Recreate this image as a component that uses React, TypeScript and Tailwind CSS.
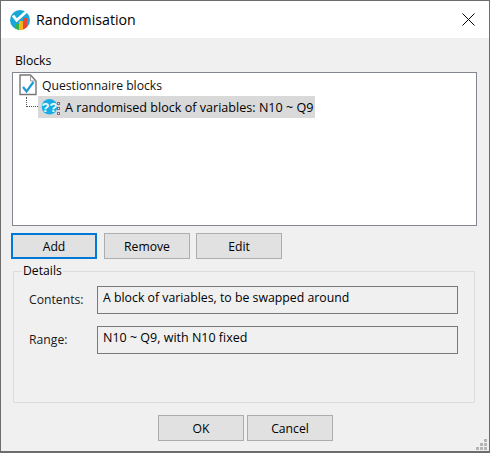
function AppIcon() {
  return (
    <svg width="20" height="20" viewBox="0 0 20 20" className="shrink-0">
      <circle cx="10" cy="10" r="10" fill="#19a7d8" />
      <path d="M3 5.500l3.700 4.800L16.500 1.500" fill="none" stroke="#fff" strokeWidth="2.800" />
      <path d="M5 18.300a10 10 0 0 0 4 1.600V14H5z" fill="#35b34a" />
      <rect x="9" y="11" width="4" height="9" fill="#f6b51e" />
      <path d="M13 8h4v9.100a10 10 0 0 1-4 2.500z" fill="#e8483a" />
    </svg>
  );
}

function DocIcon() {
  return (
    <svg width="18" height="22" viewBox="0 0 18 22" className="shrink-0">
      <path d="M1 1H11.500L17 7V20.500H1z" fill="#fff" stroke="#777" strokeWidth="1.400" />
      <path d="M11.500 1V7H17" fill="none" stroke="#999" />
      <path d="M4 13l3.500 4.500 7-9.500" fill="none" stroke="#1c9ad6" strokeWidth="2.200" />
    </svg>
  );
}

function BlockIcon() {
  return (
    <svg width="21" height="20" viewBox="0 0 21 20" className="shrink-0">
      <circle cx="8.500" cy="9.800" r="7.800" fill="#19aee3" />
      <text x="8.500" y="14.500" textAnchor="middle" fontSize="13" fontWeight="700" fill="#fff" fontFamily="'Liberation Sans', sans-serif">??</text>
      <g fill="#e8e8e8" stroke="#777">
        <rect x="16.500" y="5.500" width="2" height="2" />
        <rect x="16.500" y="10.500" width="2" height="2" />
        <rect x="16.500" y="15.500" width="2" height="2" />
      </g>
    </svg>
  );
}

function Btn({ label, focused }: { label: string; focused?: boolean }) {
  return (
    <button
      type="button"
      className={
        focused
          ? "w-[86px] h-[26px] pt-[2px] bg-[#e1e1e1] border-2 border-[#0078d7] text-[12.200px] text-black"
          : "w-[86px] h-[26px] pt-[2px] bg-[#e1e1e1] border border-[#adadad] text-[12.200px] text-black"
      }
    >
      {label}
    </button>
  );
}

function Field({ label, value, size }: { label: string; value: string; size: string }) {
  return (
    <div className="flex items-center h-[28px]">
      <span className="w-[83px] pl-[15px] text-[#1a1a1a]">{label}</span>
      <div className={`w-[361px] h-full border border-[#7a7a7a] bg-[#f0f0f0] px-[5px] pt-[1px] leading-[20px] ${size}`}>
        {value}
      </div>
    </div>
  );
}

export default function App() {
  return (
    <div className="w-[490px] h-[453px] relative flex flex-col bg-[#f0f0f0] border-x border-t border-b-2 border-[#6d6d6d] font-['Open_Sans','Noto_Sans',sans-serif] text-[12.200px] text-black overflow-hidden">
      <div className="h-[37px] shrink-0 bg-white flex items-center pl-[9px] pr-[14px]">
        <AppIcon />
        <span className="ml-[6px] text-[14.200px] flex-1">Randomisation</span>
        <svg width="13" height="13" viewBox="0 0 13 13" className="shrink-0">
          <path d="M.500.500l12 12M12.500.500l-12 12" stroke="#000" strokeWidth="1" fill="none" />
        </svg>
      </div>

      <div className="flex-1 flex flex-col px-[11px]">
        <div className="h-[34px] flex items-end pl-[3px] pb-[2px] leading-[18px]">Blocks</div>
        <div className="w-[465px] h-[154px] bg-white border border-[#828790] pl-[6px] pt-[1px]">
          <div className="flex items-center h-[22px] gap-[5px]">
            <DocIcon />
            <span className="pt-[3px] text-[#111]">Questionnaire blocks</span>
          </div>
          <div className="flex items-center ml-[7px]">
            <div className="w-[12px] h-[10px] mb-[10px] border-l border-b border-dotted border-[#555]" />
            <div className="w-[277px] h-[22px] bg-[#d9d9d9] flex items-center pl-[3px] gap-[3px]">
              <BlockIcon />
              <span className="pt-[3px] text-[12.600px]">A randomised block of variables: N10 ~ Q9</span>
            </div>
          </div>
        </div>

        <div className="flex items-start mt-[7px] -ml-[1px]">
          <Btn label="Add" focused />
          <div className="flex gap-[6px] ml-[7px]">
            <Btn label="Remove" />
            <Btn label="Edit" />
          </div>
        </div>

        <fieldset className="mt-[4px] ml-[1px] w-[462px] h-[140px] border border-[#dcdcdc]">
          <legend className="ml-[8px] px-[1px] leading-[16px]">Details</legend>
          <div className="flex flex-col gap-[12px] mt-[7px]">
            <Field label="Contents:" value="A block of variables, to be swapped around" size="text-[12.300px]" />
            <Field label="Range:" value="N10 ~ Q9, with N10 fixed" size="text-[12.500px]" />
          </div>
        </fieldset>

        <div className="flex gap-[3px] ml-[146px] mt-[12px]">
          <Btn label="OK" />
          <Btn label="Cancel" />
        </div>
      </div>

      <svg width="12" height="12" viewBox="0 0 12 12" className="absolute right-[1px] bottom-0" fill="#b5b5b5">
        <rect x="8" y="0" width="3" height="3" />
        <rect x="4" y="4" width="3" height="3" />
        <rect x="8" y="4" width="3" height="3" />
        <rect x="0" y="8" width="3" height="3" />
        <rect x="4" y="8" width="3" height="3" />
        <rect x="8" y="8" width="3" height="3" />
      </svg>
    </div>
  );
}
